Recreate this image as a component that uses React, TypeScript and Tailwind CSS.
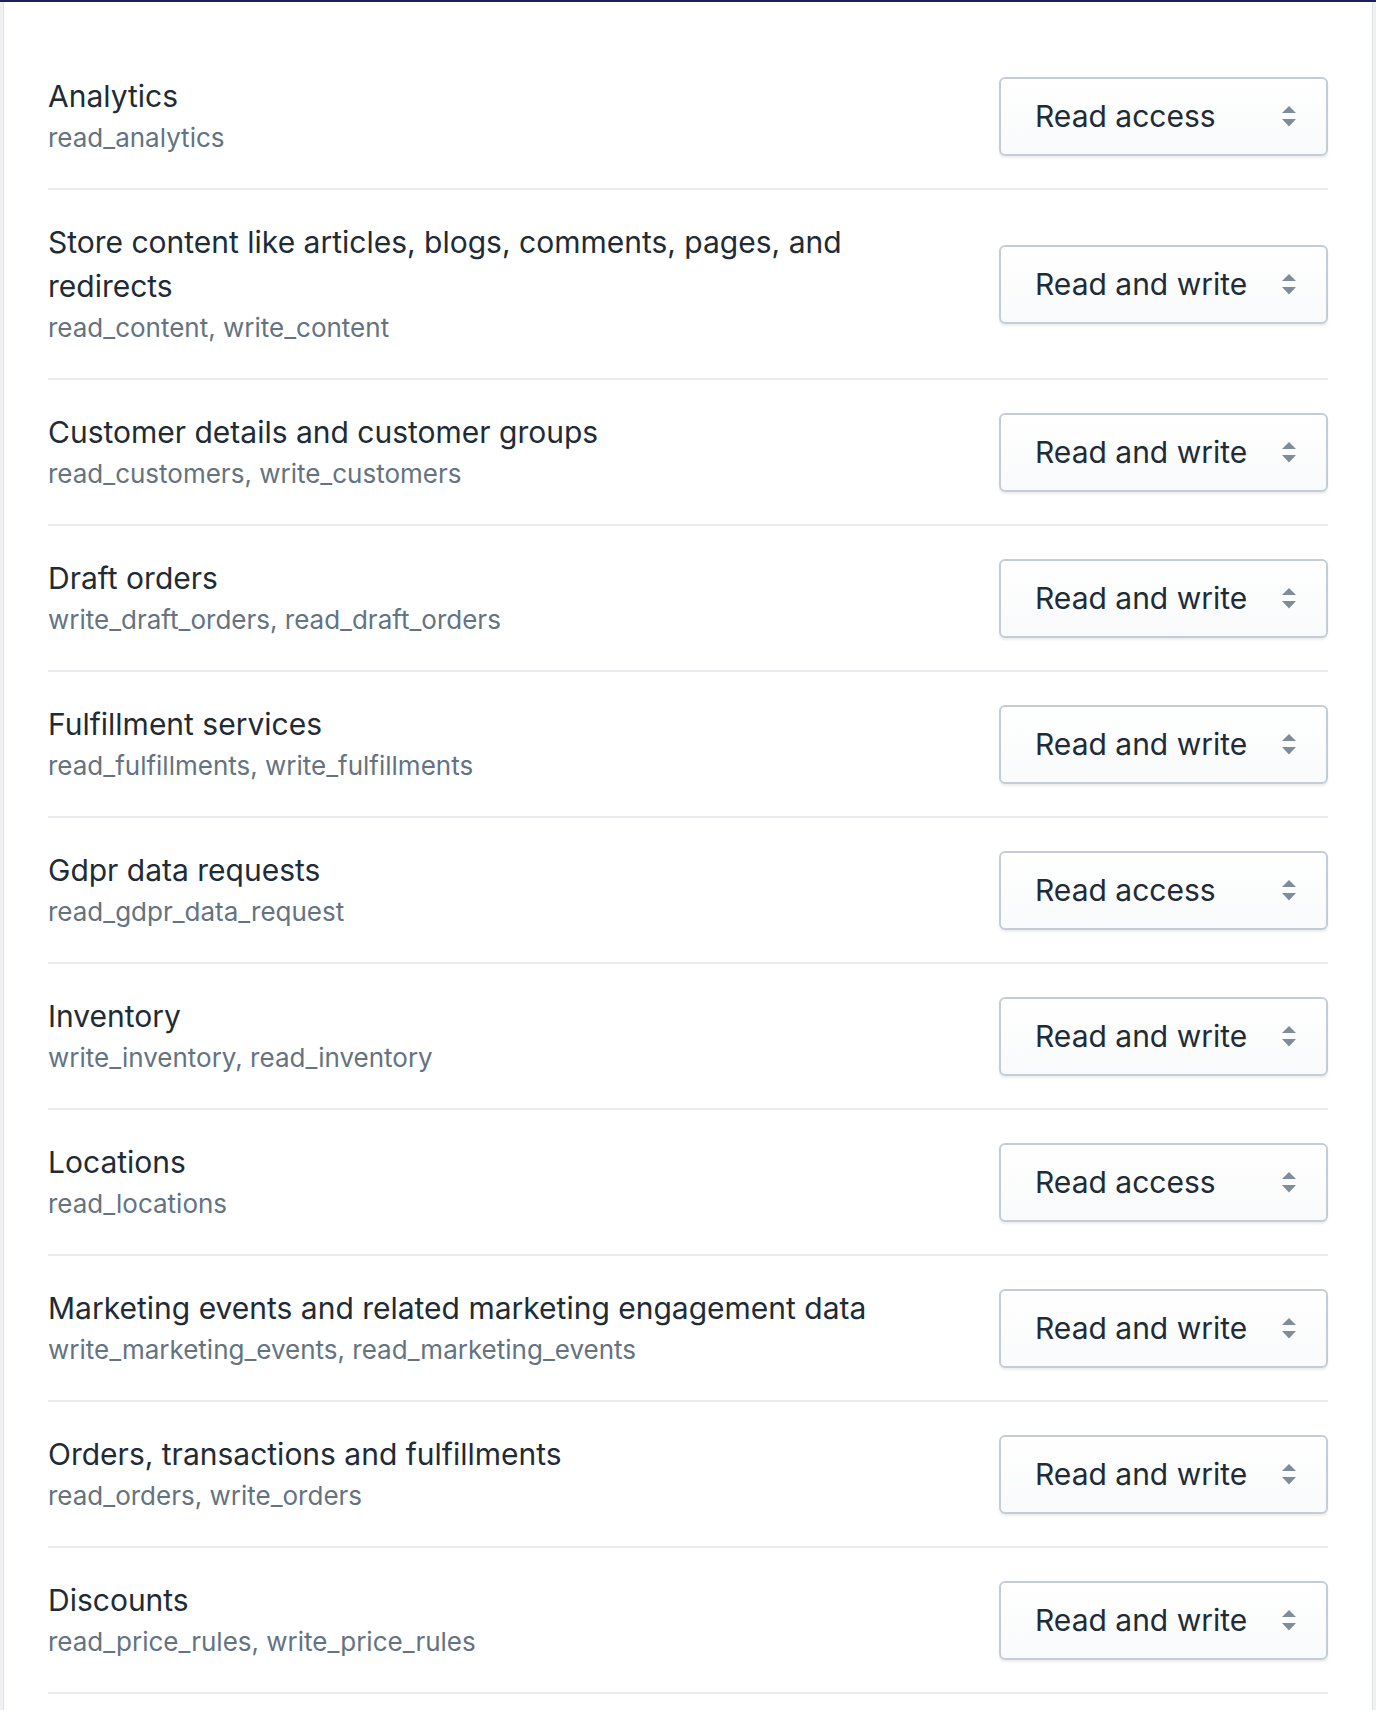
import React from "react";

const scopes = [
  { title: "Analytics", handles: "read_analytics", access: "Read access" },
  {
    title: "Store content like articles, blogs, comments, pages, and redirects",
    handles: "read_content, write_content",
    access: "Read and write",
  },
  { title: "Customer details and customer groups", handles: "read_customers, write_customers", access: "Read and write" },
  { title: "Draft orders", handles: "write_draft_orders, read_draft_orders", access: "Read and write" },
  { title: "Fulfillment services", handles: "read_fulfillments, write_fulfillments", access: "Read and write" },
  { title: "Gdpr data requests", handles: "read_gdpr_data_request", access: "Read access" },
  { title: "Inventory", handles: "write_inventory, read_inventory", access: "Read and write" },
  { title: "Locations", handles: "read_locations", access: "Read access" },
  {
    title: "Marketing events and related marketing engagement data",
    handles: "write_marketing_events, read_marketing_events",
    access: "Read and write",
  },
  { title: "Orders, transactions and fulfillments", handles: "read_orders, write_orders", access: "Read and write" },
  { title: "Discounts", handles: "read_price_rules, write_price_rules", access: "Read and write" },
];

function SelectArrows() {
  return (
    <svg width="14" height="21" viewBox="0 0 14 21" className="shrink-0">
      <path d="M7 0 L14 7 L0 7 Z" fill="#7f8c99" />
      <path d="M0 13 L14 13 L7 20.5 Z" fill="#7f8c99" />
    </svg>
  );
}

function AccessSelect({ value }: { value: string }) {
  return (
    <div className="w-[329px] h-[79px] shrink-0 flex items-center justify-between pl-[34px] pr-[30px] rounded-[6px] border-2 border-[#c4cdd5] bg-gradient-to-b from-white to-[#f9fafb] shadow-[0_2px_2px_rgba(22,29,37,0.08)]">
      <span className="text-[30px] leading-[40px] text-[#212b36]">{value}</span>
      <SelectArrows />
    </div>
  );
}

export default function App() {
  return (
    <div className="min-h-[1710px] bg-[#eef0f2] font-['Inter','Liberation_Sans',sans-serif]">
      <div className="h-[2px] bg-[#1e2159]" />
      <div className="mx-[3px] min-h-[1708px] bg-white border-x border-[#dde1e5] px-[44px] pt-[42px]">
        {scopes.map((s) => (
          <div
            key={s.title}
            className="flex items-center justify-between gap-8 py-[30px] border-b-2 border-[#e8ebee]"
          >
            <div className="max-w-[880px]">
              <div className="text-[30px] leading-[44px] text-[#212b36]">{s.title}</div>
              <div className="text-[26px] leading-[40px] text-[#637381]">{s.handles}</div>
            </div>
            <AccessSelect value={s.access} />
          </div>
        ))}
      </div>
    </div>
  );
}
